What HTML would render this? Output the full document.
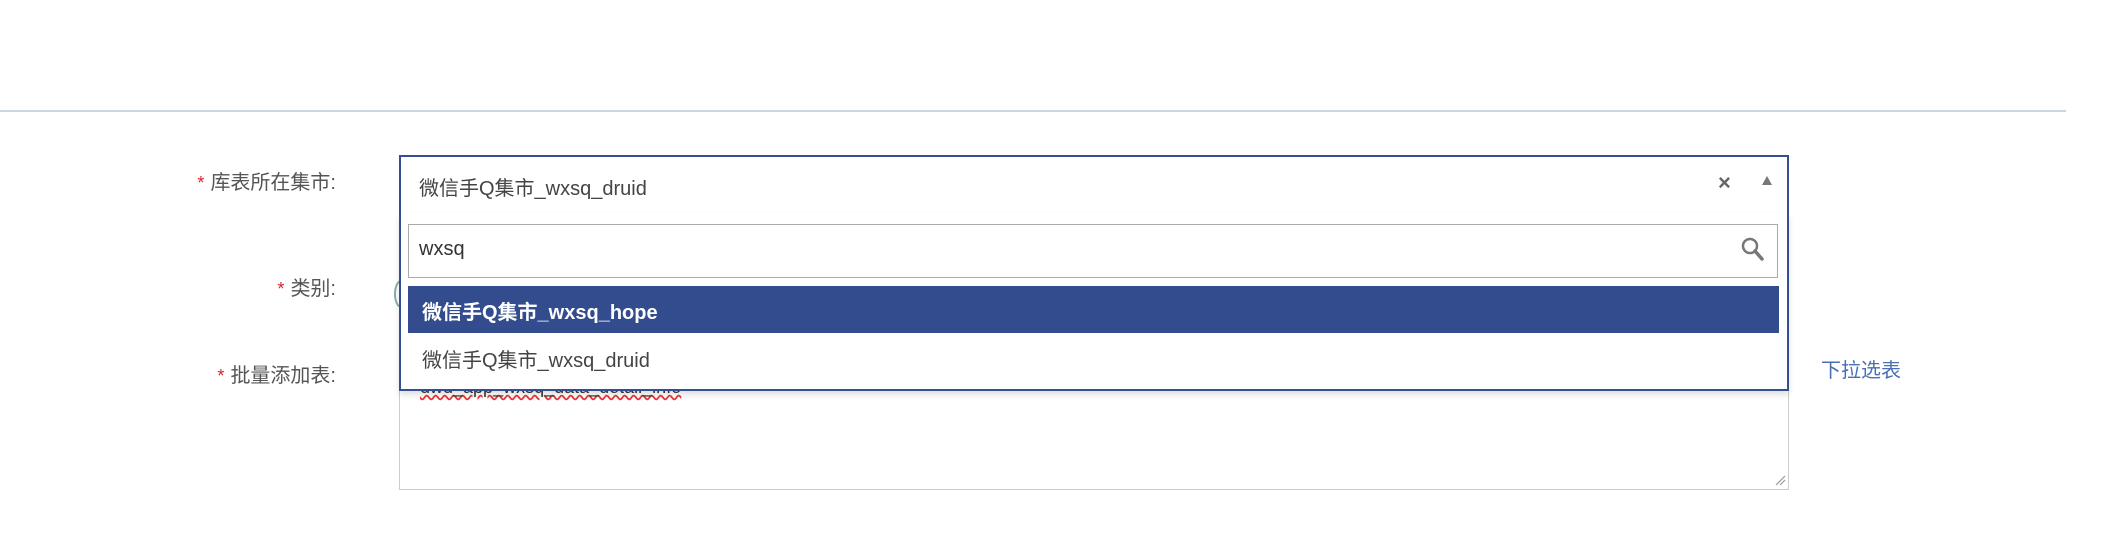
<!DOCTYPE html>
<html><head><meta charset="utf-8"><style>
body{margin:0;width:2128px;height:548px;background:#fff;position:relative;overflow:hidden;font-family:"Liberation Sans","Noto Sans CJK SC",sans-serif;font-size:20px;color:#444}
.a{position:absolute}
.lbl{position:absolute;right:1792px;text-align:right;color:#555;white-space:nowrap;line-height:24px}
.lbl b{color:#d9232d;font-weight:normal;margin-right:6px;font-size:18px}
</style></head><body>
<div class="a" style="left:0;top:110px;width:2066px;height:2px;background:#ccd6e0"></div>

<div class="lbl" style="top:171px"><b>*</b>库表所在集市:</div>
<div class="lbl" style="top:277px"><b>*</b>类别:</div>
<div class="lbl" style="top:364px"><b>*</b>批量添加表:</div>

<!-- textarea -->
<div class="a" style="left:399px;top:380px;width:1388px;height:109px;border:1px solid #ccc;border-top:none;background:#fff"></div>
<div class="a" style="left:420px;top:377px;font-size:18px;color:#333;text-decoration:underline wavy #e33;">dwd_app_wxsq_data_detail_info</div>
<svg class="a" style="left:1774px;top:474px" width="12" height="12"><path d="M2 11L11 2M6 11L11 6" stroke="#999" stroke-width="1.2"/></svg>
<div class="a" style="left:394px;top:280px;width:12px;height:24px;border:2px solid #8aa;border-radius:50%;border-right:none"></div>

<!-- select -->
<div class="a" style="left:399px;top:155px;width:1386px;height:56px;border:2px solid #344f92;background:#fff"></div>
<div class="a" style="left:419px;top:172px;color:#444">微信手Q集市_wxsq_druid</div>
<div class="a" style="left:1718px;top:170px;font-size:22px;font-weight:bold;color:#666">×</div>
<div class="a" style="left:1762px;top:176px;width:0;height:0;border-left:5px solid transparent;border-right:5px solid transparent;border-bottom:9px solid #777"></div>

<!-- dropdown -->
<div class="a" style="left:399px;top:213px;width:1386px;height:176px;border:2px solid #344f92;border-top:none;background:#fff;box-shadow:0 4px 6px rgba(0,0,0,.12)"></div>
<div class="a" style="left:408px;top:224px;width:1368px;height:52px;border:1px solid #aaa;background:#fff"></div>
<div class="a" style="left:419px;top:238px;color:#333">wxsq</div>
<svg class="a" style="left:1740px;top:236px" width="26" height="28"><circle cx="10" cy="10" r="7" fill="none" stroke="#777" stroke-width="2.5"/><path d="M15 15L22 23" stroke="#777" stroke-width="3.5" stroke-linecap="round"/></svg>
<div class="a" style="left:408px;top:286px;width:1371px;height:47px;background:#334c8e"></div>
<div class="a" style="left:422px;top:296px;color:#fff;font-weight:bold">微信手Q集市_wxsq_hope</div>
<div class="a" style="left:422px;top:344px;color:#444">微信手Q集市_wxsq_druid</div>

<div class="a" style="left:1821px;top:354px;color:#4a6fb5">下拉选表</div>
</body></html>
